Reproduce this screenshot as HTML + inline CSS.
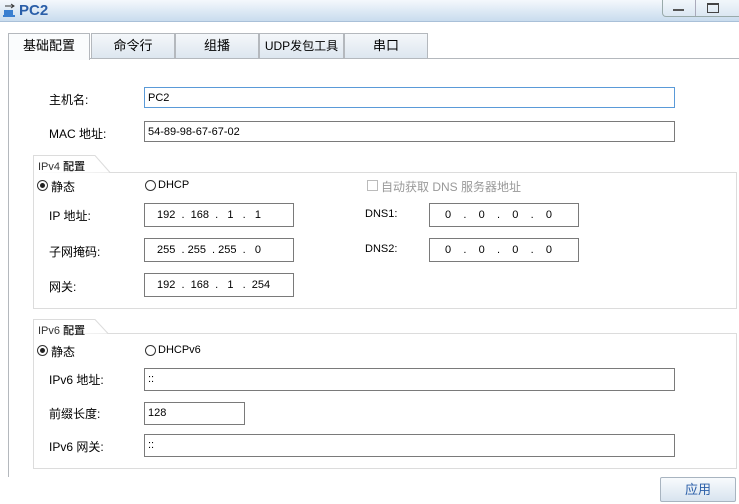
<!DOCTYPE html><html><head><style>
body{margin:0;width:739px;height:504px;background:#fff;font-family:"Liberation Sans","Noto Sans CJK SC",sans-serif;font-size:12px;color:#000;position:relative;overflow:hidden}
.a{position:absolute}
.title{left:0;top:0;width:739px;height:21px;background:linear-gradient(#f4f8fc,#c9dcee);border-bottom:1px solid #a9c0d8}
.tab{top:33px;height:24px;border:1px solid #b4b8bd;border-bottom:none;background:linear-gradient(#f4f7fa,#dde6ef);text-align:center;line-height:24px;font-size:13px}
.inp{border:1px solid #7a7a7a;height:21px;line-height:21px;padding-left:3px;font-size:11px;box-sizing:border-box;background:#fff}
.lbl{font-size:12px}
.fs{border:1px solid #dcdcdc;border-top:none}
.radio{width:11px;height:11px;border:1px solid #333;border-radius:50%;box-sizing:border-box}
.dot{width:5px;height:5px;background:#222;border-radius:50%;left:2px;top:2px}
</style></head><body>
<div class="a title"></div>
<svg class="a" style="left:2px;top:3px" width="16" height="16"><path d="M3 3h9M9 1l3 2-3 2" stroke="#333" fill="none"/><rect x="2" y="7" width="9" height="5" fill="#3a7fd0"/><rect x="1" y="12" width="12" height="2" fill="#3a7fd0"/></svg>
<div class="a" style="left:19px;top:2px;font-size:15px;color:#2a5ea8;font-weight:bold">PC2</div>
<div class="a" style="left:662px;top:-2px;width:77px;height:18px;border:1px solid #9aa;border-top:none;border-radius:0 0 0 4px;background:linear-gradient(#f4f8fc,#dbe7f2)"></div>
<div class="a" style="left:695px;top:-2px;width:1px;height:18px;background:#aab"></div>
<div class="a" style="left:673px;top:9px;width:11px;height:2px;background:#555"></div>
<div class="a" style="left:707px;top:3px;width:10px;height:7px;border:1px solid #444;border-top-width:2px"></div>
<div class="a" style="left:8px;top:58px;width:731px;height:418px;border-top:1px solid #b4b8bd;border-left:1px solid #b4b8bd"></div>
<div class="a tab" style="left:8px;width:80px;background:#fafcfd;height:26px">基础配置</div>
<div class="a tab" style="left:91px;width:82px">命令行</div>
<div class="a tab" style="left:175px;width:82px">组播</div>
<div class="a tab" style="left:259px;width:83px;font-size:12px">UDP发包工具</div>
<div class="a tab" style="left:344px;width:82px">串口</div>

<div class="a lbl" style="left:49px;top:91px">主机名:</div>
<div class="a inp" style="left:144px;top:87px;width:531px;border-color:#5a9ad8">PC2</div>
<div class="a lbl" style="left:49px;top:125px">MAC 地址:</div>
<div class="a inp" style="left:144px;top:121px;width:531px">54-89-98-67-67-02</div>

<div class="a fs" style="left:33px;top:172px;width:702px;height:135px;border-top:1px solid #dcdcdc"></div>
<svg class="a" style="left:33px;top:155px" width="80" height="18"><path d="M0.5 18V0.5H62L77 17.5" fill="#fff" stroke="#dcdcdc"/></svg>
<div class="a" style="left:38px;top:158px;font-size:11px;color:#333">IPv4 <b>配置</b></div>
<div class="a radio" style="left:37px;top:180px"><div class="a dot"></div></div>
<div class="a lbl" style="left:51px;top:178px">静态</div>
<div class="a radio" style="left:145px;top:180px"></div>
<div class="a" style="left:158px;top:179px;font-size:11px">DHCP</div>
<div class="a" style="left:367px;top:180px;width:11px;height:11px;border:1px solid #bbb;box-sizing:border-box"></div>
<div class="a lbl" style="left:381px;top:178px;color:#999">自动获取 DNS 服务器地址</div>
<div class="a lbl" style="left:49px;top:207px">IP 地址:</div>
<div class="a inp" style="left:144px;top:203px;width:150px;height:24px;line-height:23px;padding-left:12px;white-space:pre">192  .  168  .   1   .   1</div>
<div class="a lbl" style="left:365px;top:208px;font-size:11px">DNS1:</div>
<div class="a inp" style="left:429px;top:203px;width:150px;height:24px;line-height:23px;padding-left:15px;white-space:pre">0    .    0    .    0    .    0</div>
<div class="a lbl" style="left:49px;top:243px">子网掩码:</div>
<div class="a inp" style="left:144px;top:238px;width:150px;height:24px;line-height:23px;padding-left:12px;white-space:pre">255  . 255  . 255  .   0</div>
<div class="a lbl" style="left:365px;top:243px;font-size:11px">DNS2:</div>
<div class="a inp" style="left:429px;top:238px;width:150px;height:24px;line-height:23px;padding-left:15px;white-space:pre">0    .    0    .    0    .    0</div>
<div class="a lbl" style="left:49px;top:278px">网关:</div>
<div class="a inp" style="left:144px;top:273px;width:150px;height:24px;line-height:23px;padding-left:12px;white-space:pre">192  .  168  .   1   .  254</div>

<div class="a fs" style="left:33px;top:333px;width:702px;height:134px;border-top:1px solid #dcdcdc"></div>
<svg class="a" style="left:33px;top:319px" width="80" height="15"><path d="M0.5 15V0.5H62L75 14.5" fill="#fff" stroke="#dcdcdc"/></svg>
<div class="a" style="left:38px;top:322px;font-size:11px;color:#333">IPv6 <b>配置</b></div>
<div class="a radio" style="left:37px;top:345px"><div class="a dot"></div></div>
<div class="a lbl" style="left:51px;top:343px">静态</div>
<div class="a radio" style="left:145px;top:345px"></div>
<div class="a" style="left:158px;top:344px;font-size:11px">DHCPv6</div>
<div class="a lbl" style="left:49px;top:371px">IPv6 地址:</div>
<div class="a inp" style="left:144px;top:368px;width:531px;height:23px">::</div>
<div class="a lbl" style="left:49px;top:405px">前缀长度:</div>
<div class="a inp" style="left:144px;top:402px;width:101px;height:23px">128</div>
<div class="a lbl" style="left:49px;top:438px">IPv6 网关:</div>
<div class="a inp" style="left:144px;top:434px;width:531px;height:23px">::</div>

<div class="a" style="left:660px;top:477px;width:74px;height:23px;border:1px solid #a8b4c0;border-radius:2px;background:linear-gradient(#f8fbfd,#d8e4ef);text-align:center;line-height:23px;font-size:13px;color:#2a5ea8">应用</div>
</body></html>
